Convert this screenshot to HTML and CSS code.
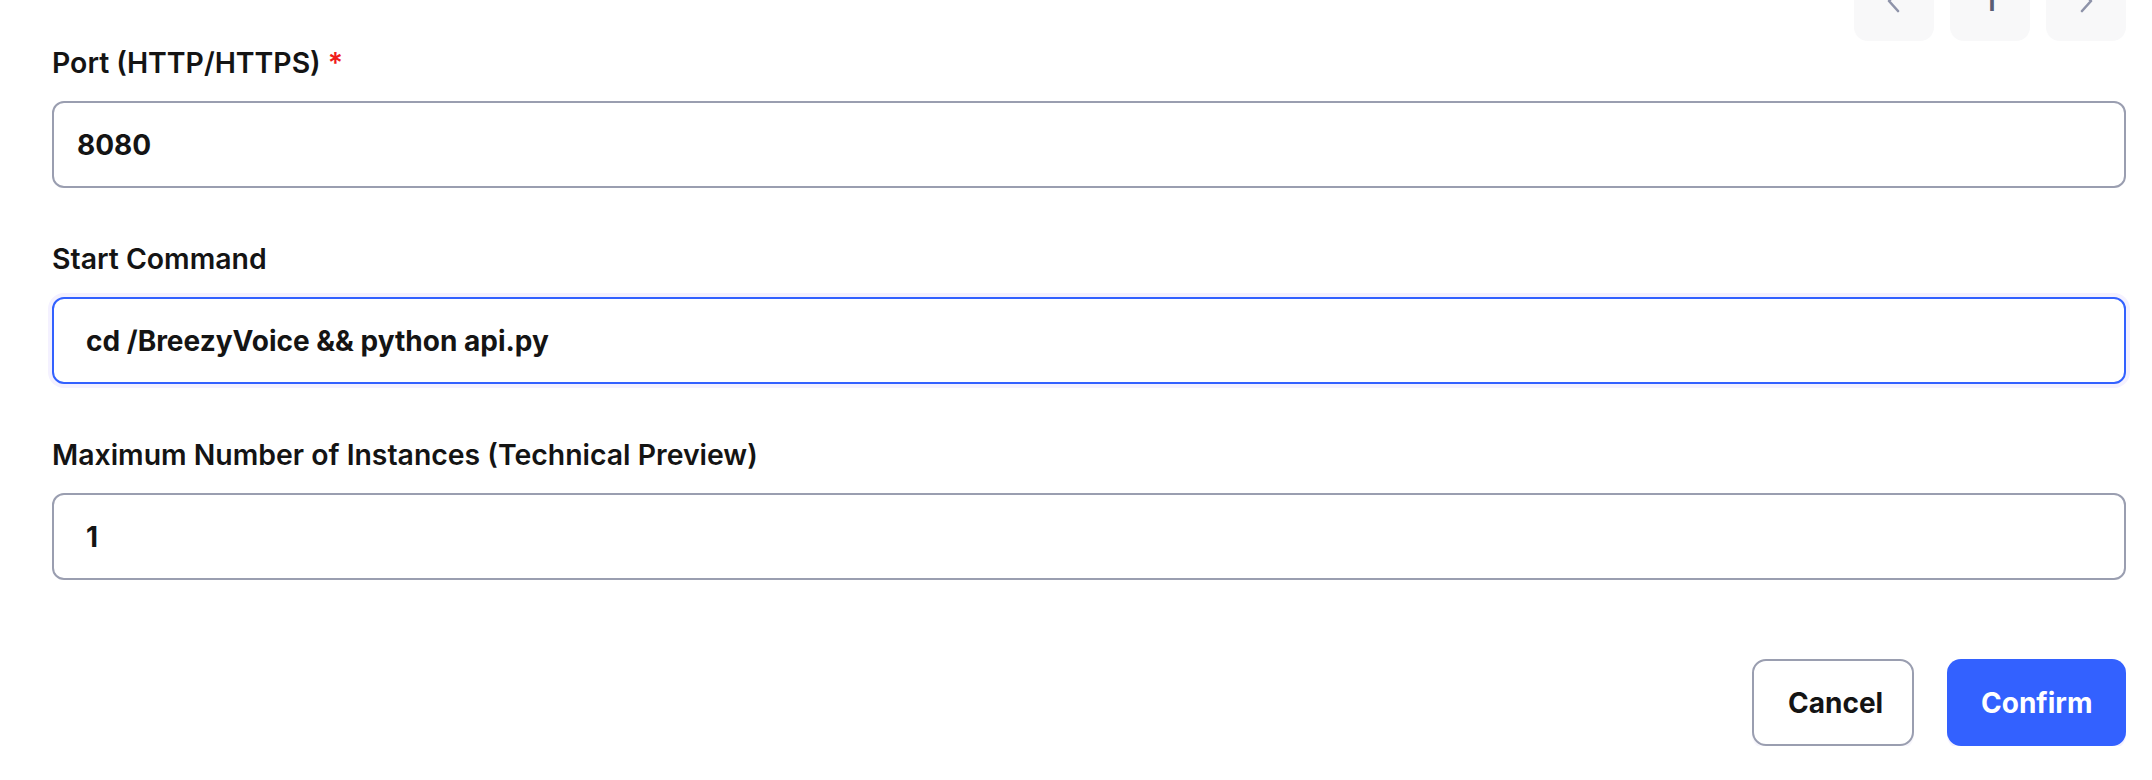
FILE: index.html
```html
<!DOCTYPE html>
<html lang="en">
<head>
<meta charset="utf-8">
<title>Service settings</title>
<link rel="stylesheet" href="styles.css">
</head>
<body>
<div class="page">
  <div class="pager">
    <button class="pager-btn" aria-label="Previous">
      <svg viewBox="0 0 20 24" width="20" height="24"><path d="M14 2 L5 12 L14 22" fill="none" stroke="#8e93a9" stroke-width="2.6" stroke-linecap="round" stroke-linejoin="round"/></svg>
    </button>
    <button class="pager-btn pager-num">1</button>
    <button class="pager-btn" aria-label="Next">
      <svg viewBox="0 0 20 24" width="20" height="24"><path d="M6 2 L15 12 L6 22" fill="none" stroke="#8e93a9" stroke-width="2.6" stroke-linecap="round" stroke-linejoin="round"/></svg>
    </button>
  </div>

  <form class="form">
    <div class="field">
      <label class="label">Port (HTTP/HTTPS) <span class="req">*</span></label>
      <div class="input input-narrow">8080</div>
    </div>
    <div class="field">
      <label class="label">Start Command</label>
      <div class="input input-focus">cd /BreezyVoice &amp;&amp; python api.py</div>
    </div>
    <div class="field">
      <label class="label">Maximum Number of Instances (Technical Preview)</label>
      <div class="input">1</div>
    </div>
    <div class="actions">
      <button type="button" class="btn btn-cancel">Cancel</button>
      <button type="button" class="btn btn-confirm">Confirm</button>
    </div>
  </form>
</div>
</body>
</html>
```

FILE: styles.css
```css
* { box-sizing: border-box; }

html, body {
  margin: 0;
  padding: 0;
  background: #ffffff;
}

body {
  font-family: Inter, "Noto Sans", "Liberation Sans", sans-serif;
  color: #141414;
  overflow: hidden;
}

.page {
  padding: 0 26px 0 52px;
}

.pager {
  display: flex;
  justify-content: flex-end;
  gap: 16px;
  margin-top: -39px;
}

.pager-btn {
  width: 80px;
  height: 80px;
  border: none;
  border-radius: 14px;
  background: #f8f8f9;
  display: flex;
  align-items: center;
  justify-content: center;
  padding: 0;
  font-family: inherit;
}

.pager-num {
  font-size: 28px;
  font-weight: 600;
  color: #5a5d75;
}

.form {
  display: flex;
  flex-direction: column;
  margin-top: 2px;
}

.field {
  display: flex;
  flex-direction: column;
  gap: 18px;
  margin-bottom: 51px;
}

.label {
  font-size: 28.4px;
  font-weight: 600;
  line-height: 40px;
  color: #141414;
}

.req {
  color: #f01c1c;
}

.input {
  height: 87px;
  border: 2px solid #9a9eb0;
  border-radius: 12px;
  padding: 0 23px;
  display: flex;
  align-items: center;
  font-size: 28px;
  font-weight: 700;
  color: #141414;
  background: #ffffff;
}

.input-focus,
.field .input:not(.input-narrow) {
  padding-left: 32px;
}

.input-focus {
  border-color: #3361ff;
  box-shadow: 0 0 0 4px #f4f1ff;
}

.actions {
  display: flex;
  justify-content: flex-end;
  gap: 33px;
  margin-top: 28px;
}

.btn {
  height: 87px;
  border-radius: 14px;
  font-family: inherit;
  font-size: 28px;
  font-weight: 700;
  padding: 0 34px;
  cursor: pointer;
}

.btn-cancel {
  background: #ffffff;
  border: 2px solid #9a9eb0;
  color: #141414;
  box-shadow: 0 3px 0 #f7f6fc;
  width: 162px;
}

.btn-confirm {
  background: #3361ff;
  border: none;
  color: #ffffff;
  box-shadow: 0 3px 0 #f3f1ff;
  width: 179px;
}
```
